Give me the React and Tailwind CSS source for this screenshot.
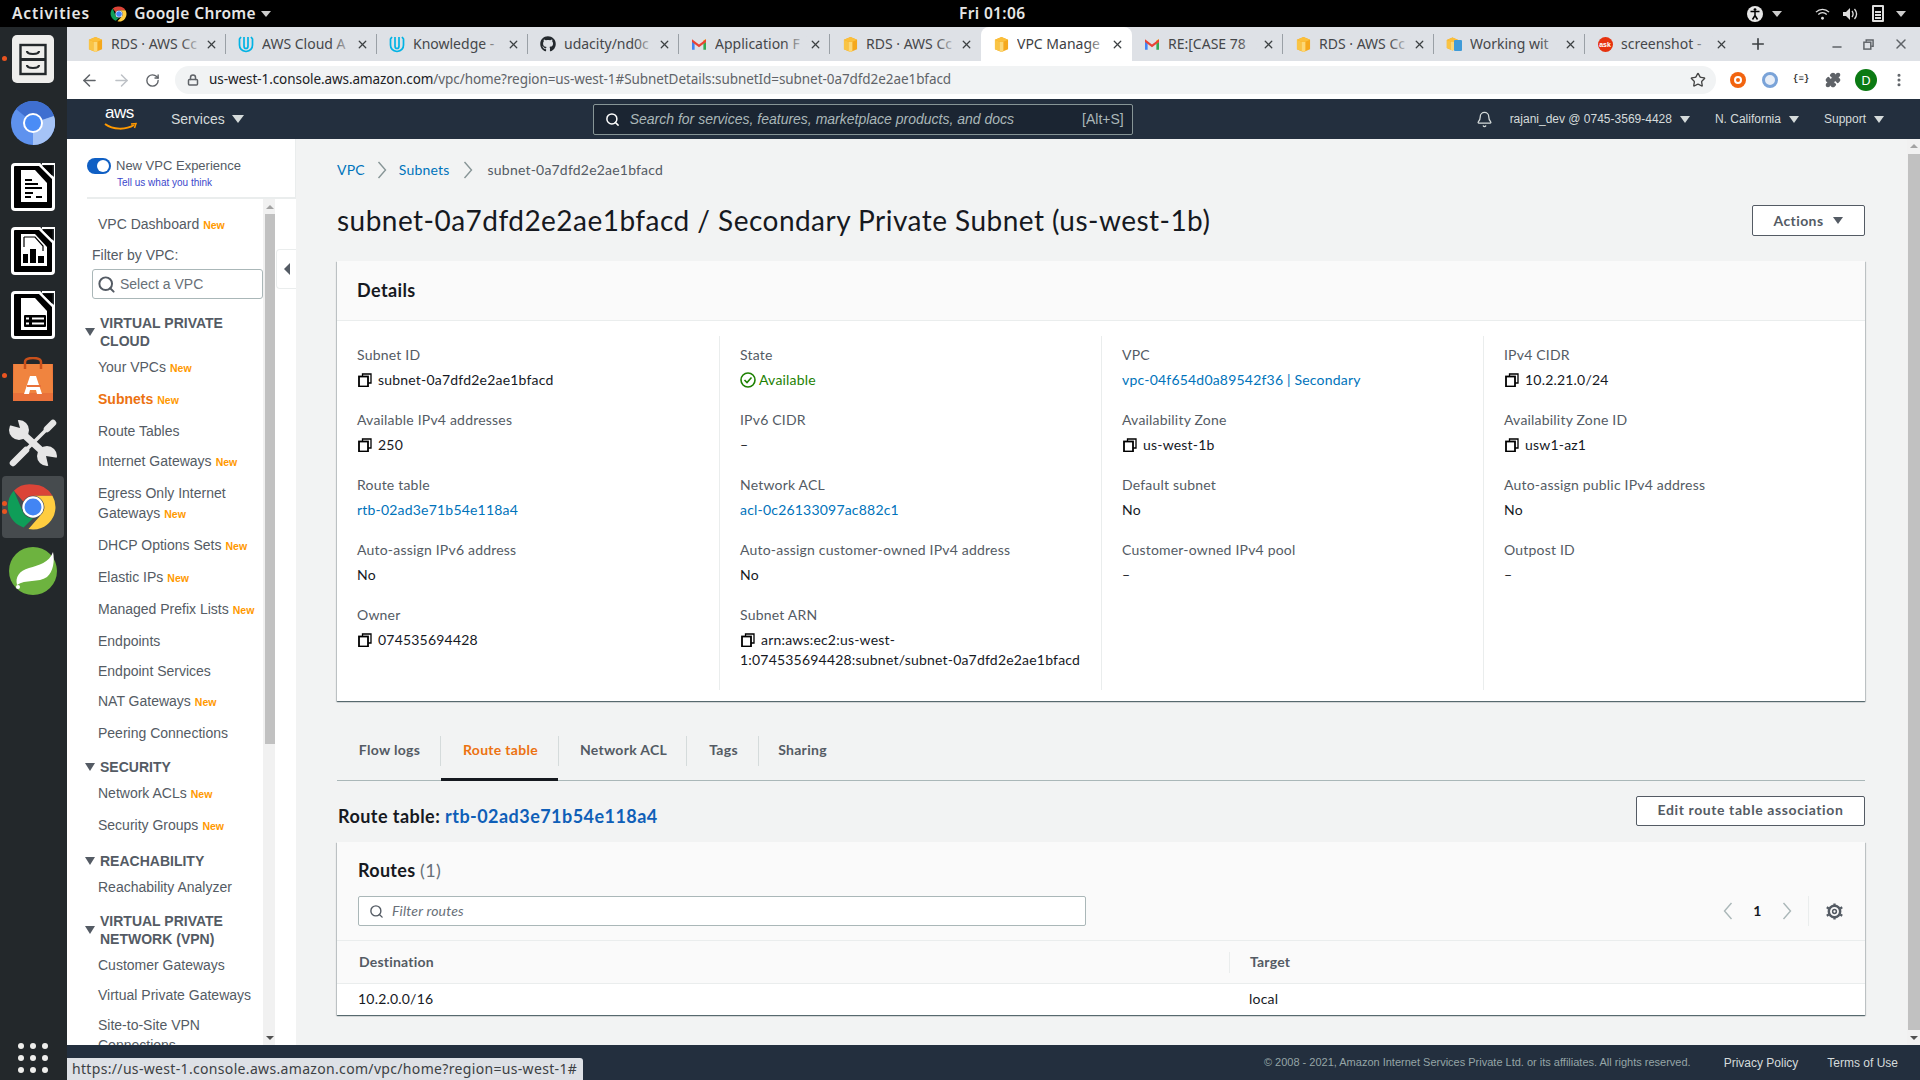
import { Search, Plus, X, Star, ArrowLeft, ArrowRight, RotateCw, Lock, EllipsisVertical, Puzzle, Bell, Minus } from "lucide-react";
import { FaGithub } from "react-icons/fa";

const Ember = "font-['Lato','Noto_Sans',sans-serif]";

const Cube = ({ className = "w-[15px] h-[17px]" }) => (
    <svg viewBox="0 0 16 18" className={className}>
        <path d="M1 4 L8 1 L15 4 V14 L8 17 L1 14Z" fill="#f5a81c" />
        <path d="M1 4 L6 6 V16.2 L1 14Z" fill="#f9c445" />
        <path d="M6 6 L10 6 V16.2 L8 17 L6 16.2Z" fill="#fcd877" />
        <path d="M1 4 L8 1 L15 4 L10 6 H6Z" fill="#fbbf3a" />
    </svg>
);

const UdacityIcon = () => (
    <svg viewBox="0 0 16 18" className="w-[16px] h-[18px]" fill="none" stroke="#02b3e4" strokeWidth="1.7">
        <path d="M3 2 L1.5 4 V10 C1.5 14 5 16 8 16.5 C11 16 14.5 14 14.5 10 V4 L13 2" />
        <path d="M6 2 V11 C6 12.5 7 13.5 8 13.5 C9 13.5 10 12.5 10 11 V2" />
    </svg>
);

const GmailIcon = () => (
    <svg viewBox="0 0 16 12" className="w-[14px] h-[11px]">
        <path d="M0 2 V12 H3 V4Z" fill="#4285f4" />
        <path d="M16 2 V12 H13 V4Z" fill="#34a853" />
        <path d="M13 1 L16 0 V3 L13 5.5Z" fill="#fbbc04" />
        <path d="M0 0 L8 6 L16 0 V3 L8 9 L0 3Z" fill="#ea4335" />
    </svg>
);

const WorkingIcon = () => (
    <div className="relative w-[16px] h-[16px]">
        <Cube className="w-[13px] h-[16px]" />
        <div className="absolute right-0 bottom-[1px] w-[8px] h-[11px] bg-[#3f9bd8] rounded-[1px]" />
    </div>
);

const AskIcon = () => (
    <div className="w-[15px] h-[15px] rounded-full bg-[#e6320e] text-white text-[7px] leading-[15px] font-bold text-center font-['Liberation_Sans',sans-serif]">ask</div>
);

const tabs = [
    { title: "RDS · AWS Cc", icon: <Cube /> },
    { title: "AWS Cloud A", icon: <UdacityIcon /> },
    { title: "Knowledge -", icon: <UdacityIcon /> },
    { title: "udacity/nd0c", icon: <FaGithub className="text-[#24292e] text-[16px]" /> },
    { title: "Application F", icon: <GmailIcon /> },
    { title: "RDS · AWS Cc", icon: <Cube /> },
    { title: "VPC Manage", icon: <Cube />, active: true },
    { title: "RE:[CASE 78", icon: <GmailIcon /> },
    { title: "RDS · AWS Cc", icon: <Cube /> },
    { title: "Working wit", icon: <WorkingIcon /> },
    { title: "screenshot -", icon: <AskIcon /> },
];

const ChromeLogo = ({ size = 16 }) => (
    <svg viewBox="0 0 48 48" width={size} height={size}>
        <path d="M24 4 A20 20 0 0 1 41.3 14 H24 A10 10 0 0 0 15.3 19 L7 9.5 A20 20 0 0 1 24 4Z" fill="#db4437" />
        <path d="M7 9.5 L15.3 29 A10 10 0 0 0 24 34 L15.6 42.2 A20 20 0 0 1 7 9.5Z" fill="#0f9d58" />
        <path d="M41.3 14 A20 20 0 0 1 20 43.6 L32.7 29 A10 10 0 0 0 24 14Z" fill="#ffcd40" />
        <circle cx="24" cy="24" r="9.5" fill="#fff" />
        <circle cx="24" cy="24" r="7.5" fill="#4285f4" />
    </svg>
);

const Tri = ({ className = "" }) => (
    <span className={`inline-block w-0 h-0 border-l-[5px] border-r-[5px] border-t-[6px] border-l-transparent border-r-transparent ${className}`} />
);

// taller, thinner chevron than lucide's, used by breadcrumb and pagination
const Chevron = ({ left, className = "" }) => (
    <svg viewBox="0 0 10 18" className={`w-[10px] h-[18px] shrink-0 ${className}`} fill="none" stroke="currentColor" strokeWidth="1.4">
        <path d={left ? "M8.5 1 L1.5 9 L8.5 17" : "M1.5 1 L8.5 9 L1.5 17"} />
    </svg>
);

const TopBar = () => (
    <div className="h-[27px] bg-black text-[#e6e6e6] flex items-center relative font-['Noto_Sans',sans-serif] text-[15.5px] tracking-[0.35px] font-semibold shrink-0">
        <span className="ml-[12px] tracking-[0.9px]">Activities</span>
        <span className="ml-[20px]"><ChromeLogo size={18} /></span>
        <span className="ml-[6px]">Google Chrome</span>
        <Tri className="ml-[5px] border-t-[#ccc]" />
        <span className="absolute left-[959px] top-[2px]">Fri 01:06</span>
        <div className="ml-auto flex items-center pr-[14px]">
            <svg viewBox="0 0 16 16" className="w-[16px] h-[16px]">
                <circle cx="8" cy="8" r="8" fill="#e6e6e6" />
                <circle cx="8" cy="3.6" r="1.4" fill="#000" />
                <path d="M3.5 5.6 L12.5 5.6 M8 5.6 V9.5 M8 9.5 L5.5 13.5 M8 9.5 L10.5 13.5" stroke="#000" strokeWidth="1.5" fill="none" />
            </svg>
            <Tri className="ml-[9px] border-t-[#ccc]" />
            <svg viewBox="0 0 16 14" className="ml-[33px] w-[15px] h-[14px]" fill="none" stroke="#ddd" strokeWidth="1.4">
                <path d="M1 5 C5 1 11 1 15 5" />
                <path d="M3.5 7.5 C6 5 10 5 12.5 7.5" />
                <circle cx="8" cy="11.5" r="1.5" fill="#ddd" stroke="none" />
            </svg>
            <svg viewBox="0 0 16 14" className="ml-[12px] w-[16px] h-[14px]">
                <path d="M1 5 H4 L8 1 V13 L4 9 H1Z" fill="#ddd" />
                <path d="M10 4 C11.5 6 11.5 8 10 10 M12.5 2 C15 5 15 9 12.5 12" fill="none" stroke="#ddd" strokeWidth="1.3" />
            </svg>
            <div className="ml-[14px] w-[12px] h-[17px] border-2 border-[#ddd] rounded-[1px] flex flex-col justify-end gap-[1px] p-[1px]">
                <div className="h-[2px] bg-[#ddd]" />
                <div className="h-[2px] bg-[#ddd]" />
                <div className="h-[2px] bg-[#ddd]" />
            </div>
            <Tri className="ml-[12px] border-t-[#ccc]" />
        </div>
    </div>
);

const TabStrip = () => (
    <div className="h-[34px] bg-[#dee1e6] flex items-stretch pl-[8px] shrink-0 font-['Noto_Sans',sans-serif] text-[14px] text-[#45474a]">
        {tabs.map((t, idx) => (
            <div
                key={idx}
                className={`relative w-[151px] flex items-center ${t.active ? "bg-white rounded-t-[8px] text-[#3c4043]" : ""}`}
            >
                <div className="w-[36px] flex justify-center pl-[4px] shrink-0">{t.icon}</div>
                <div className="relative w-[92px] overflow-hidden whitespace-nowrap mb-[2px]">
                    {t.title}
                    <div className={`absolute right-0 top-0 bottom-0 w-[22px] bg-gradient-to-l ${t.active ? "from-white" : "from-[#dee1e6]"} to-transparent`} />
                </div>
                <X size={13} strokeWidth={2.4} className="ml-[2px] text-[#3c4043]" />
                {!t.active && tabs[idx + 1] && !tabs[idx + 1].active && (
                    <div className="absolute right-0 top-[7px] h-[20px] w-px bg-[#9aa0a6]" />
                )}
            </div>
        ))}
        <div className="w-[47px] flex items-center justify-center">
            <Plus size={18} strokeWidth={2.2} className="text-[#3c4043] ml-[-3px]" />
        </div>
        <div className="flex-1 flex items-center justify-end gap-[18px] pr-[11px] text-[#5f6368]">
            <Minus size={14} strokeWidth={2.2} className="mt-[6px]" />
            <svg viewBox="0 0 12 12" className="w-[11px] h-[11px] mx-[1px]" fill="none" stroke="#5f6368" strokeWidth="1.6">
                <path d="M3.5 3 V1 H11 V8 H9" />
                <rect x="1" y="3.5" width="7.5" height="7.5" />
            </svg>
            <X size={16} strokeWidth={2.2} />
        </div>
    </div>
);

const Toolbar = () => (
    <div className="h-[38px] bg-white flex items-center shrink-0 text-[#5f6368]">
        <div className="flex items-center pl-[13px] gap-[11px] w-[108px]">
            <ArrowLeft size={19} strokeWidth={1.9} />
            <ArrowRight size={19} strokeWidth={1.9} className="text-[#bdc1c6] ml-[2px]" />
            <RotateCw size={15} strokeWidth={2.2} className="ml-[3px]" />
        </div>
        <div className="w-[1541px] h-[28px] rounded-full bg-[#f1f3f4] flex items-center pl-[12px] pr-[10px] font-['Noto_Sans',sans-serif] text-[13.5px] tracking-[-0.07px]">
            <Lock size={12} strokeWidth={3} className="text-[#5f6368] mr-[10px]" />
            <span className="text-[#202124] mb-[2px]">us-west-1.console.aws.amazon.com</span>
            <span className="text-[#5f6368] mb-[2px]">/vpc/home?region=us-west-1#SubnetDetails:subnetId=subnet-0a7dfd2e2ae1bfacd</span>
            <Star size={16} strokeWidth={2} className="ml-auto text-[#444]" />
        </div>
        <div className="flex items-center pl-[14px]">
            <div className="w-[16px] h-[16px] rounded-full bg-[#f2640f] flex items-center justify-center">
                <div className="w-[8px] h-[8px] rounded-full border-2 border-white" />
            </div>
            <div className="ml-[16px] w-[16px] h-[16px] rounded-full border-[3px] border-[#7aa3d8] bg-[#e8eef7]" />
            <span className="ml-[15px] w-[18px] text-[9px] font-bold text-[#333] font-['Liberation_Mono',monospace]">{"{≡}"}</span>
            <Puzzle size={16} fill="#5f6368" className="ml-[14px]" />
            <div className="ml-[14px] w-[22px] h-[22px] rounded-full bg-[#0b7a13] text-white text-[13px] leading-[22px] text-center font-['Noto_Sans',sans-serif]">D</div>
            <EllipsisVertical size={16} strokeWidth={2.6} className="ml-[14px]" />
        </div>
    </div>
);

const AwsNav = () => (
    <div className="h-[40px] bg-[#232f3e] flex items-center shrink-0 relative font-['Liberation_Sans',sans-serif] text-[#d5dbdb] text-[12px]">
        <div className="ml-[37px] w-[34px] h-[30px] relative text-white">
            <span className="absolute left-[1px] top-[-2px] text-[17px] font-normal leading-[22px] tracking-[-0.5px]">aws</span>
            <svg viewBox="0 0 34 10" className="absolute left-0 top-[18px] w-[34px] h-[10px]" fill="none">
                <path d="M1 2 C9 8 22 8 30 3" stroke="#f90" strokeWidth="2" />
                <path d="M27 2 L32 1.5 L30.5 6" stroke="#f90" strokeWidth="1.5" />
            </svg>
        </div>
        <span className="ml-[33px] text-[14px]">Services</span>
        <Tri className="ml-[7px] border-t-[#d5dbdb] border-t-[8px] border-l-[6px] border-r-[6px]" />
        <div className="ml-[349px] w-[540px] h-[31px] border border-[#879596] bg-[#1b2532] rounded-[2px] flex items-center pl-[11px] pr-[8px]">
            <Search size={15} strokeWidth={2.4} className="text-white" />
            <span className="ml-[10px] italic text-[14px] text-[#aab7b8]">Search for services, features, marketplace products, and docs</span>
            <span className="ml-auto text-[14px] text-[#aab7b8]">[Alt+S]</span>
        </div>
        <div className="ml-auto flex items-center pr-[36px]">
            <Bell size={17} strokeWidth={1.8} className="text-[#d5dbdb]" />
            <span className="ml-[17px]">rajani_dev @ 0745-3569-4428</span>
            <Tri className="ml-[8px] border-t-[#d5dbdb] border-t-[7px]" />
            <span className="ml-[25px]">N. California</span>
            <Tri className="ml-[8px] border-t-[#d5dbdb] border-t-[7px]" />
            <span className="ml-[25px]">Support</span>
            <Tri className="ml-[8px] border-t-[#d5dbdb] border-t-[7px]" />
        </div>
    </div>
);

const DocIcon = ({ children }) => (
    <svg viewBox="0 0 44 48" className="w-[44px] h-[48px]">
        <rect x="0" y="0" width="44" height="48" rx="4" fill="#fff" />
        <rect x="3" y="3" width="38" height="42" rx="1" fill="#000" />
        <path d="M27 0 L44 17 V0Z" fill="#23282b" />
        <path d="M27 0 L44 17" stroke="#fff" strokeWidth="3" />
        <path d="M31 2.5 H41.5 V13Z" fill="#000" />
        <path d="M41.5 0 H44 V17 M31 1 H44" stroke="#fff" strokeWidth="2" fill="none" />
        <path d="M10 7 H24 L36 20 V39 H10Z" fill="#fff" />
        {children}
    </svg>
);

const dockIcons = [
    <div key="files" className="w-[42px] h-[48px] bg-[#eeeeec] rounded-[5px] flex items-center justify-center">
        <svg viewBox="0 0 42 48" className="w-[42px] h-[48px]">
            <rect x="8.5" y="10" width="25" height="29" fill="none" stroke="#23282b" strokeWidth="2.4" />
            <path d="M8 24.5 H34" stroke="#23282b" strokeWidth="3" />
            <path d="M15 16 C15 20 27 20 27 16 M15 30 C15 34 27 34 27 30" stroke="#23282b" strokeWidth="2.2" fill="none" />
        </svg>
    </div>,
    <svg key="chromium" viewBox="0 0 44 44" className="w-[44px] h-[44px]">
        <circle cx="22" cy="22" r="22" fill="#5e92ee" />
        <path d="M5 8 A22 22 0 0 1 43 15 L22 22Z" fill="#3f6fd0" />
        <path d="M43 15 A22 22 0 0 1 22 44 L22 22Z" fill="#a5c3f6" />
        <circle cx="22" cy="22" r="10" fill="#fff" />
        <circle cx="22" cy="22" r="8" fill="#4a8cf6" />
    </svg>,
    <DocIcon key="writer"><path d="M14 17 H21 M14 21 H27 M14 25 H31 M14 30 H22 M14 34 H20 M25 34 H31" stroke="#000" strokeWidth="1.8" /></DocIcon>,
    <DocIcon key="calc">
        <path d="M12 27 H17 V36 H12Z M19 22 H25 V36 H19Z M27 29 H33 V36 H27Z" fill="#000" />
        <path d="M13 10 V20 M13 10 L24 10 L32 19 V24" stroke="#000" strokeWidth="1.2" fill="none" />
    </DocIcon>,
    <DocIcon key="base"><rect x="13" y="24" width="22" height="12" rx="1" fill="#000" /><path d="M21 27.5 H33 M21 32.5 H33 M15 27.5 H18 M15 32.5 H18" stroke="#fff" strokeWidth="1.8" /></DocIcon>,
    <svg key="bag" viewBox="0 0 44 44" className="w-[44px] h-[44px]">
        <path d="M2 7 H42 V44 H2Z" fill="#e9713a" />
        <path d="M3 7 H41 L42 36 H2Z" fill="#f0843f" />
        <path d="M14 12 V5 C14 2 17 1 22 1 C27 1 30 2 30 5 V12" fill="none" stroke="#c9501b" strokeWidth="2.5" />
        <path d="M19 19 H25 L31 37 H26 L25 33 H19 L18 37 H13Z" fill="#fff" />
        <path d="M16 28 H30 V30 H16Z" fill="#e9713a" />
    </svg>,
    <svg key="tools" viewBox="0 0 48 48" className="w-[48px] h-[48px]" fill="none" stroke="#e6e6e6" strokeLinecap="round">
        <path d="M4 44 L17 31" strokeWidth="6.5" />
        <path d="M17 31 L37 11" strokeWidth="3.5" />
        <path d="M38 10 L44 4" strokeWidth="6.5" />
        <path d="M13 14 L35 34" strokeWidth="7" />
        <circle cx="10" cy="11" r="10" fill="#e6e6e6" stroke="none" />
        <path d="M8 -2 L11 9 L0 6 L-2 -2Z" fill="#23282b" stroke="none" />
        <circle cx="38" cy="37" r="10" fill="#e6e6e6" stroke="none" />
        <path d="M50 39 L37 37 L40 50 L50 50Z" fill="#23282b" stroke="none" />
    </svg>,
    <div key="chrome" className="w-[62px] h-[62px] rounded-[4px] bg-[#464b4e] flex items-center justify-center">
        <ChromeLogo size={54} />
    </div>,
    <svg key="spring" viewBox="0 0 48 48" className="w-[48px] h-[48px]">
        <circle cx="24" cy="24" r="24" fill="#6db33f" />
        <path d="M44 5 C40 16 30 18 20 21 C10 24 6 30 8 38 C16 32 30 36 38 30 C44 25 46 14 44 5Z" fill="#fff" />
        <circle cx="9" cy="40" r="2" fill="#fff" />
    </svg>,
];

const Dock = () => (
    <div className="w-[67px] bg-[#23282b] flex flex-col items-center shrink-0 relative">
        {dockIcons.map((icon, idx) => (
            <div key={idx} className="h-[64px] w-full flex items-center justify-center shrink-0 pr-[1px]">{icon}</div>
        ))}
        <span className="absolute left-[2px] top-[29px] w-[5px] h-[5px] rounded-full bg-[#e95420]" />
        <span className="absolute left-[2px] top-[346px] w-[5px] h-[5px] rounded-full bg-[#e95420]" />
        <span className="absolute left-[2px] top-[474px] w-[5px] h-[5px] rounded-full bg-[#e95420]" />
        <span className="absolute left-[2px] top-[482px] w-[5px] h-[5px] rounded-full bg-[#e95420]" />
        <div className="mt-auto mb-[7px] mr-[1px] grid grid-cols-3 gap-[6px]">
            {Array.from({ length: 9 }).map((_, idx) => (
                <span key={idx} className="w-[6px] h-[6px] rounded-full bg-[#eeeeec]" />
            ))}
        </div>
    </div>
);

const New = () => <span className="ml-[4px] text-[10.5px] font-bold text-[#ff9900] font-['Liberation_Sans',sans-serif]">New</span>;

const SideItem = ({ label, isNew, active, lines }) => (
    <div
        className={`pl-[31px] leading-[20px] ${lines ? "pt-[6px] pb-[5px]" : isNew ? "h-[32px] pt-[6px]" : "h-[30px] pt-[6px]"} ${active ? "font-bold text-[#ec7211]" : "text-[#545b64]"}`}
    >
        {lines ? <>{lines[0]}<br />{lines[1]}</> : label}
        {isNew && <New />}
    </div>
);

const SideHeader = ({ className = "", children }) => (
    <div className={`flex items-center pl-[18px] font-bold text-[#545b64] leading-[18px] ${className}`}>
        <Tri className="border-t-[#545b64] border-t-[8px] mr-[5px] shrink-0" />
        <span>{children}</span>
    </div>
);

const Sidebar = () => (
    <aside className="w-[229px] bg-white shrink-0 flex flex-col min-h-0 text-[14px] font-['Liberation_Sans',sans-serif]">
        <div className="h-[60px] ml-[20px] border-b-2 border-r border-[#eaeded] shrink-0 pt-[19px]">
            <div className="flex items-center">
                <div className="w-[24px] h-[16px] rounded-full bg-[#0f5fc4] relative shrink-0">
                    <span className="absolute right-[2px] top-[2px] w-[12px] h-[12px] rounded-full bg-white" />
                </div>
                <span className="ml-[5px] text-[13px] text-[#545b64] leading-[16px]">New VPC Experience</span>
            </div>
            <div className="ml-[30px] mt-[2px] text-[10px] text-[#3b48cc] leading-[14px]">Tell us what you think</div>
        </div>
        <div className="flex flex-1 min-h-0">
            <div className="w-[196px] overflow-hidden shrink-0">
                <div className="pt-[9px]">
                    <SideItem label="VPC Dashboard" isNew />
                    <div className="pl-[25px] leading-[20px] text-[#545b64] mt-[5px]">Filter by VPC:</div>
                    <div className="ml-[25px] w-[171px] h-[30px] mt-[4px] border border-[#aab7b8] rounded-[3px] flex items-center pl-[4px] text-[#687078]">
                        <Search size={19} strokeWidth={2.5} className="text-[#545b64]" />
                        <span className="ml-[4px]">Select a VPC</span>
                    </div>
                    <SideHeader className="mt-[15px]">VIRTUAL PRIVATE<br />CLOUD</SideHeader>
                    <div className="mt-[1px]">
                        <SideItem label="Your VPCs" isNew />
                        <SideItem label="Subnets" isNew active />
                        <SideItem label="Route Tables" />
                        <SideItem label="Internet Gateways" isNew />
                        <SideItem lines={["Egress Only Internet", "Gateways"]} isNew />
                        <SideItem label="DHCP Options Sets" isNew />
                        <SideItem label="Elastic IPs" isNew />
                        <SideItem label="Managed Prefix Lists" isNew />
                        <SideItem label="Endpoints" />
                        <SideItem label="Endpoint Services" />
                        <SideItem label="NAT Gateways" isNew />
                        <SideItem label="Peering Connections" />
                    </div>
                    <SideHeader className="mt-[11px]">SECURITY</SideHeader>
                    <div className="mt-[1px]">
                        <SideItem label="Network ACLs" isNew />
                        <SideItem label="Security Groups" isNew />
                    </div>
                    <SideHeader className="mt-[11px]">REACHABILITY</SideHeader>
                    <div className="mt-[1px]">
                        <SideItem label="Reachability Analyzer" />
                    </div>
                    <SideHeader className="mt-[11px]">VIRTUAL PRIVATE<br />NETWORK (VPN)</SideHeader>
                    <div className="mt-[1px]">
                        <SideItem label="Customer Gateways" />
                        <SideItem label="Virtual Private Gateways" />
                        <SideItem lines={["Site-to-Site VPN", "Connections"]} />
                    </div>
                </div>
            </div>
            <ScrollTrack thumb="h-[530px]" className="w-[12px] pl-[2px]" />
            <div className="flex-1 relative">
                <div className="absolute left-[1px] top-[50px] w-[20px] h-[40px] border border-r-0 border-[#eaeded] rounded-l-[4px] bg-white flex items-center justify-center">
                    <span className="w-0 h-0 border-y-[6px] border-y-transparent border-r-[6px] border-r-[#545b64]" />
                </div>
            </div>
        </div>
    </aside>
);

const ScrollTrack = ({ thumb, className = "" }) => (
    <div className={`bg-[#f1f1f1] flex flex-col shrink-0 ${className}`}>
        <div className="h-[15px] flex items-center justify-center">
            <span className="w-0 h-0 border-x-[4px] border-x-transparent border-b-[4px] border-b-[#a3a3a3]" />
        </div>
        <div className={`bg-[#c1c1c1] ${thumb}`} />
        <div className="mt-auto h-[15px] flex items-center justify-center">
            <span className="w-0 h-0 border-x-[4px] border-x-transparent border-t-[4px] border-t-[#505050]" />
        </div>
    </div>
);

const CopyIcon = () => (
    <svg viewBox="0 0 14 14" className="w-[14px] h-[14px] inline-block ml-[1px] mr-[6px] align-[-2px]" fill="none" stroke="#000" strokeWidth="1.8">
        <path d="M4.5 3.5 V1 H13 V10 H10" strokeWidth="1.3" />
        <rect x="1" y="3.5" width="9" height="10" />
    </svg>
);

const Field = ({ label, children }) => (
    <div className="mb-[20px]">
        <div className="leading-[20px] text-[#545b64]">{label}</div>
        <div className="leading-[20px] mt-[5px] text-[#16191f]">{children}</div>
    </div>
);

const Link = ({ children }) => <span className="text-[#0073bb]">{children}</span>;

const detailColumns = [
    [
        ["Subnet ID", <><CopyIcon />subnet-0a7dfd2e2ae1bfacd</>],
        ["Available IPv4 addresses", <><CopyIcon />250</>],
        ["Route table", <Link>rtb-02ad3e71b54e118a4</Link>],
        ["Auto-assign IPv6 address", "No"],
        ["Owner", <><CopyIcon />074535694428</>],
    ],
    [
        ["State", (
            <span className="text-[#1d8102] flex items-center h-[20px]">
                <svg viewBox="0 0 16 16" className="w-[16px] h-[16px] mr-[3px]" fill="none" stroke="#1d8102" strokeWidth="1.6">
                    <circle cx="8" cy="8" r="7" />
                    <path d="M4.5 8 L7 10.5 L11.5 5.5" />
                </svg>
                Available
            </span>
        )],
        ["IPv6 CIDR", "–"],
        ["Network ACL", <Link>acl-0c26133097ac882c1</Link>],
        ["Auto-assign customer-owned IPv4 address", "No"],
        ["Subnet ARN", <><CopyIcon />arn:aws:ec2:us-west-<br />1:074535694428:subnet/subnet-0a7dfd2e2ae1bfacd</>],
    ],
    [
        ["VPC", <Link>vpc-04f654d0a89542f36 | Secondary</Link>],
        ["Availability Zone", <><CopyIcon />us-west-1b</>],
        ["Default subnet", "No"],
        ["Customer-owned IPv4 pool", "–"],
    ],
    [
        ["IPv4 CIDR", <><CopyIcon />10.2.21.0/24</>],
        ["Availability Zone ID", <><CopyIcon />usw1-az1</>],
        ["Auto-assign public IPv4 address", "No"],
        ["Outpost ID", "–"],
    ],
];

const cardShadow = "shadow-[0_1px_1px_0_rgba(0,28,36,0.5),1px_1px_1px_0_rgba(0,28,36,0.15),-1px_1px_1px_0_rgba(0,28,36,0.15)]";

const DetailsCard = () => (
    <div className={`mt-[25px] bg-white h-[440px] ${cardShadow}`}>
        <div className="h-[60px] bg-[#fafafa] border-b border-[#eaeded] pl-[20px] pt-[18px] text-[18px] leading-[22px] font-bold text-[#16191f] tracking-[0.4px]">Details</div>
        <div className="mt-[15px] grid grid-cols-[382px_382px_382px_1fr] pl-[20px] h-[344px] text-[14px]">
            {detailColumns.map((col, idx) => (
                <div key={idx} className={`pt-[9px] ${idx > 0 ? "border-l border-[#eaeded] pl-[20px] ml-[-20px]" : ""}`}>
                    {col.map(([label, value]) => (
                        <Field key={label} label={label}>{value}</Field>
                    ))}
                </div>
            ))}
        </div>
    </div>
);

const tabNames = ["Flow logs", "Route table", "Network ACL", "Tags", "Sharing"];
const tabWidths = ["w-[104px]", "w-[118px]", "w-[128px]", "w-[72px]", "w-[85px]"];

const DetailTabs = () => (
    <div className="mt-[35px] h-[45px] border-b border-[#aab7b8] flex items-start text-[14px] font-bold tracking-[0.3px] relative">
        {tabNames.map((name, idx) => (
            <div
                key={name}
                className={`h-[30px] leading-[28px] text-center relative pl-[2px] ${tabWidths[idx]} ${idx < 4 ? "border-r border-[#d5dbdb]" : ""} ${name === "Route table" ? "text-[#ec7211]" : "text-[#545b64]"}`}
            >
                {name}
                {name === "Route table" && <div className="absolute left-0 right-0 top-[42px] h-[3px] bg-[#16191f]" />}
            </div>
        ))}
    </div>
);

const GearIcon = () => (
    <svg viewBox="0 0 18 18" className="w-[17px] h-[17px] ml-[17px]" fill="none" stroke="#545b64">
        <circle cx="9" cy="9" r="6" strokeWidth="2.6" />
        <circle cx="9" cy="9" r="2" strokeWidth="1.6" />
        <path d="M9 0.5 V3 M9 15 V17.5 M0.8 4.5 L3 5.8 M15 12.2 L17.2 13.5 M0.8 13.5 L3 12.2 M15 5.8 L17.2 4.5" strokeWidth="2.4" />
    </svg>
);

const RoutesCard = () => (
    <div className={`mt-[16px] bg-[#fafafa] h-[173px] ${cardShadow}`}>
        <div className="h-[99px] border-b border-[#eaeded] relative">
            <div className="pl-[21px] pt-[17px] text-[18px] leading-[22px] font-bold text-[#16191f] tracking-[0.3px]">
                Routes <span className="font-normal text-[#687078]">(1)</span>
            </div>
            <div className="flex items-center pl-[21px] pr-[22px] mt-[15px]">
                <div className="w-[728px] h-[30px] border border-[#aab7b8] bg-white rounded-[2px] flex items-center pl-[10px]">
                    <Search size={15} strokeWidth={2.2} className="text-[#545b64]" />
                    <span className="ml-[8px] italic text-[#687078] mb-[1px]">Filter routes</span>
                </div>
                <div className="ml-auto flex items-center">
                    <Chevron left className="text-[#aab7b8]" />
                    <span className="w-[49px] text-center font-bold text-[#16191f] mb-[2px]">1</span>
                    <Chevron className="text-[#aab7b8]" />
                    <div className="ml-[16px] h-[30px] border-l border-[#eaeded]" />
                    <GearIcon />
                </div>
            </div>
        </div>
        <div className="h-[43px] flex items-center font-bold text-[#545b64] border-b border-[#eaeded] tracking-[0.2px]">
            <div className="w-[892px] pl-[22px] mb-[2px]">Destination</div>
            <div className="h-[21px] border-l border-[#eaeded] pl-[20px] leading-[19px]">Target</div>
        </div>
        <div className="h-[31px] bg-white flex items-center text-[#16191f]">
            <div className="w-[892px] pl-[21px] mb-[2px]">10.2.0.0/16</div>
            <div className="pl-[20px] mb-[2px]">local</div>
        </div>
    </div>
);

const MainContent = () => (
    <main className={`flex-1 min-w-0 bg-[#f2f3f3] pl-[41px] pr-[42px] pt-[21px] overflow-hidden text-[14px] tracking-[0.2px] ${Ember}`}>
        <div className="flex items-center leading-[20px] h-[20px]">
            <span className="text-[#0073bb]">VPC</span>
            <Chevron className="mx-[12px] text-[#879596]" />
            <span className="text-[#0073bb]">Subnets</span>
            <Chevron className="ml-[13px] mr-[15px] text-[#879596]" />
            <span className="text-[#545b64]">subnet-0a7dfd2e2ae1bfacd</span>
        </div>
        <div className="mt-[25px] h-[31px] flex items-center justify-between">
            <h1 className="text-[28px] leading-[31px] font-normal text-[#16191f] tracking-[0.47px]">subnet-0a7dfd2e2ae1bfacd / Secondary Private Subnet (us-west-1b)</h1>
            <button className="w-[113px] h-[31px] border border-[#545b64] rounded-[2px] bg-white font-bold text-[#545b64] flex items-center justify-center tracking-[0.4px]">
                Actions
                <Tri className="ml-[10px] border-t-[#545b64] border-t-[7px]" />
            </button>
        </div>
        <DetailsCard />
        <DetailTabs />
        <div className="mt-[15px] h-[30px] flex items-start justify-between">
            <div className="pl-[1px] pt-[8px] leading-[24px] text-[18px] font-bold text-[#16191f] tracking-[0.45px]">
                Route table: <span className="text-[#0f5fb8]">rtb-02ad3e71b54e118a4</span>
            </div>
            <button className="w-[229px] h-[30px] border border-[#545b64] rounded-[2px] bg-white font-bold text-[#545b64] tracking-[0.6px] pb-[3px]">
                Edit route table association
            </button>
        </div>
        <RoutesCard />
    </main>
);

const Footer = () => (
    <div className="h-[35px] bg-[#232f3e] shrink-0 flex items-center justify-end pr-[22px] text-[12px] font-['Liberation_Sans',sans-serif]">
        <span className="text-[#95a5a6] text-[11px]">© 2008 - 2021, Amazon Internet Services Private Ltd. or its affiliates. All rights reserved.</span>
        <span className="ml-[33px] text-[#d5dbdb]">Privacy Policy</span>
        <span className="ml-[29px] text-[#d5dbdb]">Terms of Use</span>
    </div>
);

export default function App() {
    return (
        <div className="h-screen w-[1920px] flex flex-col overflow-hidden relative">
            <TopBar />
            <div className="flex flex-1 min-h-0">
                <Dock />
                <div className="flex-1 min-w-0 flex flex-col">
                    <TabStrip />
                    <Toolbar />
                    <AwsNav />
                    <div className="flex flex-1 min-h-0">
                        <Sidebar />
                        <MainContent />
                        <ScrollTrack thumb="h-[878px]" className="w-[13px] pl-[1px]" />
                    </div>
                    <Footer />
                </div>
            </div>
            <div className="absolute left-[67px] bottom-0 w-[516px] h-[22px] bg-[#dee1e6] rounded-tr-[3px] pl-[5px] text-[14px] leading-[22px] tracking-[0.33px] text-[#3c4043] font-['Noto_Sans',sans-serif]">
                https://us-west-1.console.aws.amazon.com/vpc/home?region=us-west-1#
            </div>
        </div>
    );
}
